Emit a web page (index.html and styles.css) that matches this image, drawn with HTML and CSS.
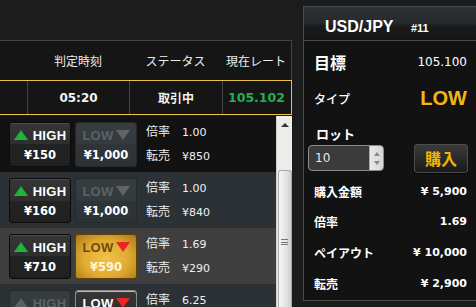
FILE: index.html
```html
<!DOCTYPE html>
<html lang="ja">
<head>
<meta charset="UTF-8">
<meta name="viewport" content="width=device-width, initial-scale=1.0">
<title>Trade Ticket</title>
<link rel="stylesheet" href="styles.css">
</head>
<body>
<div class="page">
    <div class="trades">
        <div class="top-space"></div>
        <div class="thead">
            <div class="c0"></div>
            <div class="c1">判定時刻</div>
            <div class="c2">ステータス</div>
            <div class="c3">現在レート</div>
        </div>
        <div class="trow">
            <div class="c0"></div>
            <div class="c1">05:20</div>
            <div class="c2 jp">取引中</div>
            <div class="c3 rate">105.102</div>
        </div>

        <div class="list">
            <div class="rows">
                <div class="opt dark">
                    <div class="btn on">
                        <div class="btn-top"><span class="tri up"></span>HIGH</div>
                        <div class="btn-price">¥150</div>
                    </div>
                    <div class="btn off">
                        <div class="btn-top">LOW<span class="tri down"></span></div>
                        <div class="btn-price">¥1,000</div>
                    </div>
                    <div class="info">
                        <div><span class="lbl">倍率</span>1.00</div>
                        <div><span class="lbl">転売</span>¥850</div>
                    </div>
                </div>
                <div class="opt blue">
                    <div class="btn on">
                        <div class="btn-top"><span class="tri up"></span>HIGH</div>
                        <div class="btn-price">¥160</div>
                    </div>
                    <div class="btn off">
                        <div class="btn-top">LOW<span class="tri down"></span></div>
                        <div class="btn-price">¥1,000</div>
                    </div>
                    <div class="info">
                        <div><span class="lbl">倍率</span>1.00</div>
                        <div><span class="lbl">転売</span>¥840</div>
                    </div>
                </div>
                <div class="opt picked">
                    <div class="btn on">
                        <div class="btn-top"><span class="tri up"></span>HIGH</div>
                        <div class="btn-price">¥710</div>
                    </div>
                    <div class="btn gold">
                        <div class="btn-top">LOW<span class="tri down"></span></div>
                        <div class="btn-price">¥590</div>
                    </div>
                    <div class="info">
                        <div><span class="lbl">倍率</span>1.69</div>
                        <div><span class="lbl">転売</span>¥290</div>
                    </div>
                </div>
                <div class="opt blue">
                    <div class="btn off">
                        <div class="btn-top"><span class="tri up"></span>HIGH</div>
                        <div class="btn-price">¥3,000</div>
                    </div>
                    <div class="btn on lit">
                        <div class="btn-top">LOW<span class="tri down"></span></div>
                        <div class="btn-price">¥160</div>
                    </div>
                    <div class="info">
                        <div><span class="lbl">倍率</span>6.25</div>
                        <div><span class="lbl">転売</span>¥150</div>
                    </div>
                </div>
            </div>
            <div class="scrollbar">
                <div class="sb-up"></div>
                <div class="sb-thumb"><span class="grip"></span></div>
            </div>
        </div>
    </div>

    <div class="ticket">
        <div class="ticket-head">
            <span class="pair">USD/JPY</span>
            <span class="num">#11</span>
        </div>
        <div class="t-row goal">
            <span class="t-lbl big">目標</span>
            <span class="t-val thin">105.100</span>
        </div>
        <div class="t-row type">
            <span class="t-lbl light">タイプ</span>
            <span class="t-low">LOW</span>
        </div>
        <div class="lot-lbl">ロット</div>
        <div class="lot-row">
            <div class="spin">
                <span class="spin-val">10</span>
                <span class="spin-btns"><i class="s-up"></i><i class="s-down"></i></span>
            </div>
            <button class="buy">購入</button>
        </div>
        <div class="t-row amount">
            <span class="t-lbl">購入金額</span>
            <span class="t-val">¥ 5,900</span>
        </div>
        <div class="t-row">
            <span class="t-lbl">倍率</span>
            <span class="t-val">1.69</span>
        </div>
        <div class="t-row">
            <span class="t-lbl">ペイアウト</span>
            <span class="t-val">¥ 10,000</span>
        </div>
        <div class="t-row">
            <span class="t-lbl">転売</span>
            <span class="t-val">¥ 2,900</span>
        </div>
    </div>
</div>
</body>
</html>
```

FILE: styles.css
```css
* {
    box-sizing: border-box;
}

body {
    margin: 0;
    padding: 0;
    background-color: #1c1c1c;
    color: #fff;
    font-family: "DejaVu Sans", "Noto Sans CJK JP", sans-serif;
    overflow: hidden;
}

.page {
    display: flex;
    height: 307px;
}

/* left: trade list */

.trades {
    width: 292px;
    flex: none;
}

.top-space {
    height: 40px;
}

.thead,
.trow {
    display: flex;
    align-items: stretch;
    background-color: #151515;
}

.thead {
    height: 40px;
    border-top: 1px solid #444;
    border-right: 1px solid #444;
    font-family: "Noto Sans CJK JP", sans-serif;
    font-size: 12px;
    color: #eee;
}

.trow {
    height: 35px;
    border-top: 1px solid #e6c142;
    border-bottom: 1px solid #e6c142;
    border-right: 1px solid #e6c142;
    font-size: 12px;
    font-weight: bold;
    color: #f2f2f2;
}

.c0, .c1, .c2, .c3 {
    display: flex;
    align-items: center;
    justify-content: center;
}

.c0 { width: 27px; }
.c1 { width: 102px; }
.c2 { width: 93px; }
.c3 { width: 68px; }

.trow .c1,
.trow .c2,
.trow .c3 {
    border-left: 1px solid #444;
}

.jp {
    font-family: "Noto Sans CJK JP", sans-serif;
    font-size: 12px;
}

.rate {
    color: #22b14c;
    font-size: 12.5px;
}

.list {
    display: flex;
    margin-top: 1px;
    height: 192px;
}

.rows {
    width: 276px;
    flex: none;
}

.opt {
    display: flex;
    align-items: center;
    height: 56px;
    padding-left: 9px;
}

.opt.dark { background-color: #121212; }
.opt.blue { background-color: #2b3134; }
.opt.picked { background-color: #3f3f3f; }

.btn {
    width: 62px;
    height: 45px;
    margin-right: 4px;
    border: 1px solid #0b0b0b;
    border-radius: 3px;
    display: flex;
    flex-direction: column;
    font-weight: bold;
}

.btn-top {
    height: 23px;
    padding-top: 2px;
    display: flex;
    align-items: center;
    justify-content: center;
    font-family: "Liberation Sans", Arial, sans-serif;
    font-size: 13px;
    letter-spacing: 0.3px;
}

.btn-price {
    flex: 1;
    display: flex;
    align-items: center;
    justify-content: center;
    padding-bottom: 2px;
    font-size: 11.5px;
}

.btn.on {
    background: linear-gradient(#363636 0, #2e2e2e 50%, #232323 50%, #202020 100%);
    box-shadow: inset 0 1px 0 #4c4c4c;
    color: #fff;
}

.btn.off {
    background: linear-gradient(#363c3f 0, #343a3d 50%, #2e3437 50%, #2c3235 100%);
    border-color: #24292b;
    color: #fff;
}

.btn.off .btn-top {
    color: #5c6265;
}

.btn.off .tri.up {
    border-bottom-color: #5c6164;
}

.btn.off .tri.down {
    border-top-color: #5f6467;
}

.btn.gold {
    background: radial-gradient(ellipse at 50% 55%, #f1c24c 0%, #e0aa30 55%, #a87616 100%);
    border-color: #5e430e;
    color: #fff6d8;
}

.btn.gold .btn-top {
    color: #6e4c12;
}

.btn.lit {
    border-color: #8a8a8a;
    box-shadow: inset 0 1px 0 #bbb;
}

.tri {
    display: inline-block;
    width: 0;
    height: 0;
}

.tri.up {
    border-left: 7px solid transparent;
    border-right: 7px solid transparent;
    border-bottom: 10px solid #1fb53b;
    margin-right: 5px;
}

.tri.down {
    border-left: 7px solid transparent;
    border-right: 7px solid transparent;
    border-top: 10px solid #ec2424;
    margin-left: 2px;
}

.info {
    margin-left: 5px;
    font-size: 11px;
    color: #f0f0f0;
    line-height: 22px;
}

.lbl {
    display: inline-block;
    width: 36px;
    font-family: "Noto Sans CJK JP", sans-serif;
    font-size: 12px;
}

/* scrollbar */

.scrollbar {
    width: 16px;
    background-color: #ecece9;
    border-left: 1px solid #d0d0d0;
    display: flex;
    flex-direction: column;
    align-items: center;
}

.sb-up {
    margin-top: 7px;
    width: 0;
    height: 0;
    border-left: 4px solid transparent;
    border-right: 4px solid transparent;
    border-bottom: 4px solid #333;
}

.sb-thumb {
    margin-top: 43px;
    width: 14px;
    flex: 1;
    border: 1px solid #a9a9a9;
    border-bottom: none;
    border-radius: 3px 3px 0 0;
    background: linear-gradient(90deg, #f7f7f7, #e3e3e3 60%, #cfcfcf);
    display: flex;
    justify-content: center;
}

.grip {
    margin-top: 68px;
    width: 7px;
    height: 6px;
    border-top: 1px solid #777;
    border-bottom: 1px solid #777;
    position: relative;
}

.grip::after {
    content: "";
    position: absolute;
    left: 0;
    right: 0;
    top: 1.5px;
    border-top: 1px solid #777;
}

/* right: order ticket */

.ticket {
    width: 175px;
    height: 295px;
    flex: none;
    margin-top: 6px;
    margin-left: 11px;
    border: 1px solid #4a4a4a;
    background-color: #121212;
}

.ticket-head {
    height: 34px;
    border-bottom: 1px solid #4a4a4a;
    background: linear-gradient(#2e3234 0, #272a2c 45%, #1a1a1a 60%, #161616 100%);
    padding: 11px 0 0 21px;
    font-family: "Liberation Sans", Arial, sans-serif;
    font-weight: bold;
}

.pair {
    font-size: 16px;
}

.num {
    font-size: 11px;
    margin-left: 13px;
}

.t-row {
    display: flex;
    justify-content: space-between;
    align-items: center;
    height: 31px;
    padding: 0 10px;
}

.t-row.goal {
    height: 42px;
}

.t-row.type {
    height: 30px;
}

.t-row.amount {
    height: 30px;
    margin-top: 3px;
}

.t-lbl {
    font-family: "Noto Sans CJK JP", sans-serif;
    font-size: 12px;
    font-weight: bold;
}

.t-lbl.big {
    font-size: 16px;
}

.t-lbl.light {
    font-weight: 500;
}

.t-val {
    font-size: 11px;
    font-weight: bold;
}

.t-val.thin {
    font-size: 12px;
    font-weight: normal;
}

.t-low {
    font-family: "Liberation Sans", Arial, sans-serif;
    font-size: 20px;
    font-weight: bold;
    color: #f5b516;
}

.lot-lbl {
    padding: 12px 0 0 12px;
    height: 30px;
    line-height: 18px;
    font-family: "Noto Sans CJK JP", sans-serif;
    font-size: 13px;
    font-weight: bold;
}

.lot-row {
    display: flex;
    justify-content: space-between;
    align-items: center;
    height: 30px;
    padding: 0 9px 0 4px;
}

.spin {
    width: 76px;
    height: 26px;
    border: 1px solid #8c8c8c;
    border-radius: 4px;
    background-color: #3b3b3b;
    display: flex;
    overflow: hidden;
}

.spin-val {
    flex: 1;
    padding-left: 6px;
    font-size: 12px;
    line-height: 24px;
    color: #e6e6e6;
}

.spin-btns {
    width: 14px;
    background: linear-gradient(90deg, #e9e9e9, #d6d6d6);
    border-left: 1px solid #aaa;
    display: flex;
    flex-direction: column;
    justify-content: space-around;
    align-items: center;
    padding: 3px 0;
}

.s-up,
.s-down {
    width: 0;
    height: 0;
    border-left: 3px solid transparent;
    border-right: 3px solid transparent;
}

.s-up { border-bottom: 4px solid #888; }
.s-down { border-top: 4px solid #888; }

.buy {
    width: 54px;
    height: 29px;
    border: 1px solid #4c4c4c;
    border-radius: 3px;
    background: linear-gradient(#3a3a3a, #2a2a2a 50%, #1a1a1a);
    box-shadow: 0 1px 0 #000;
    color: #f5b400;
    font-family: "Noto Sans CJK JP", sans-serif;
    font-size: 16px;
    font-weight: bold;
    padding: 0;
    cursor: pointer;
}
```
